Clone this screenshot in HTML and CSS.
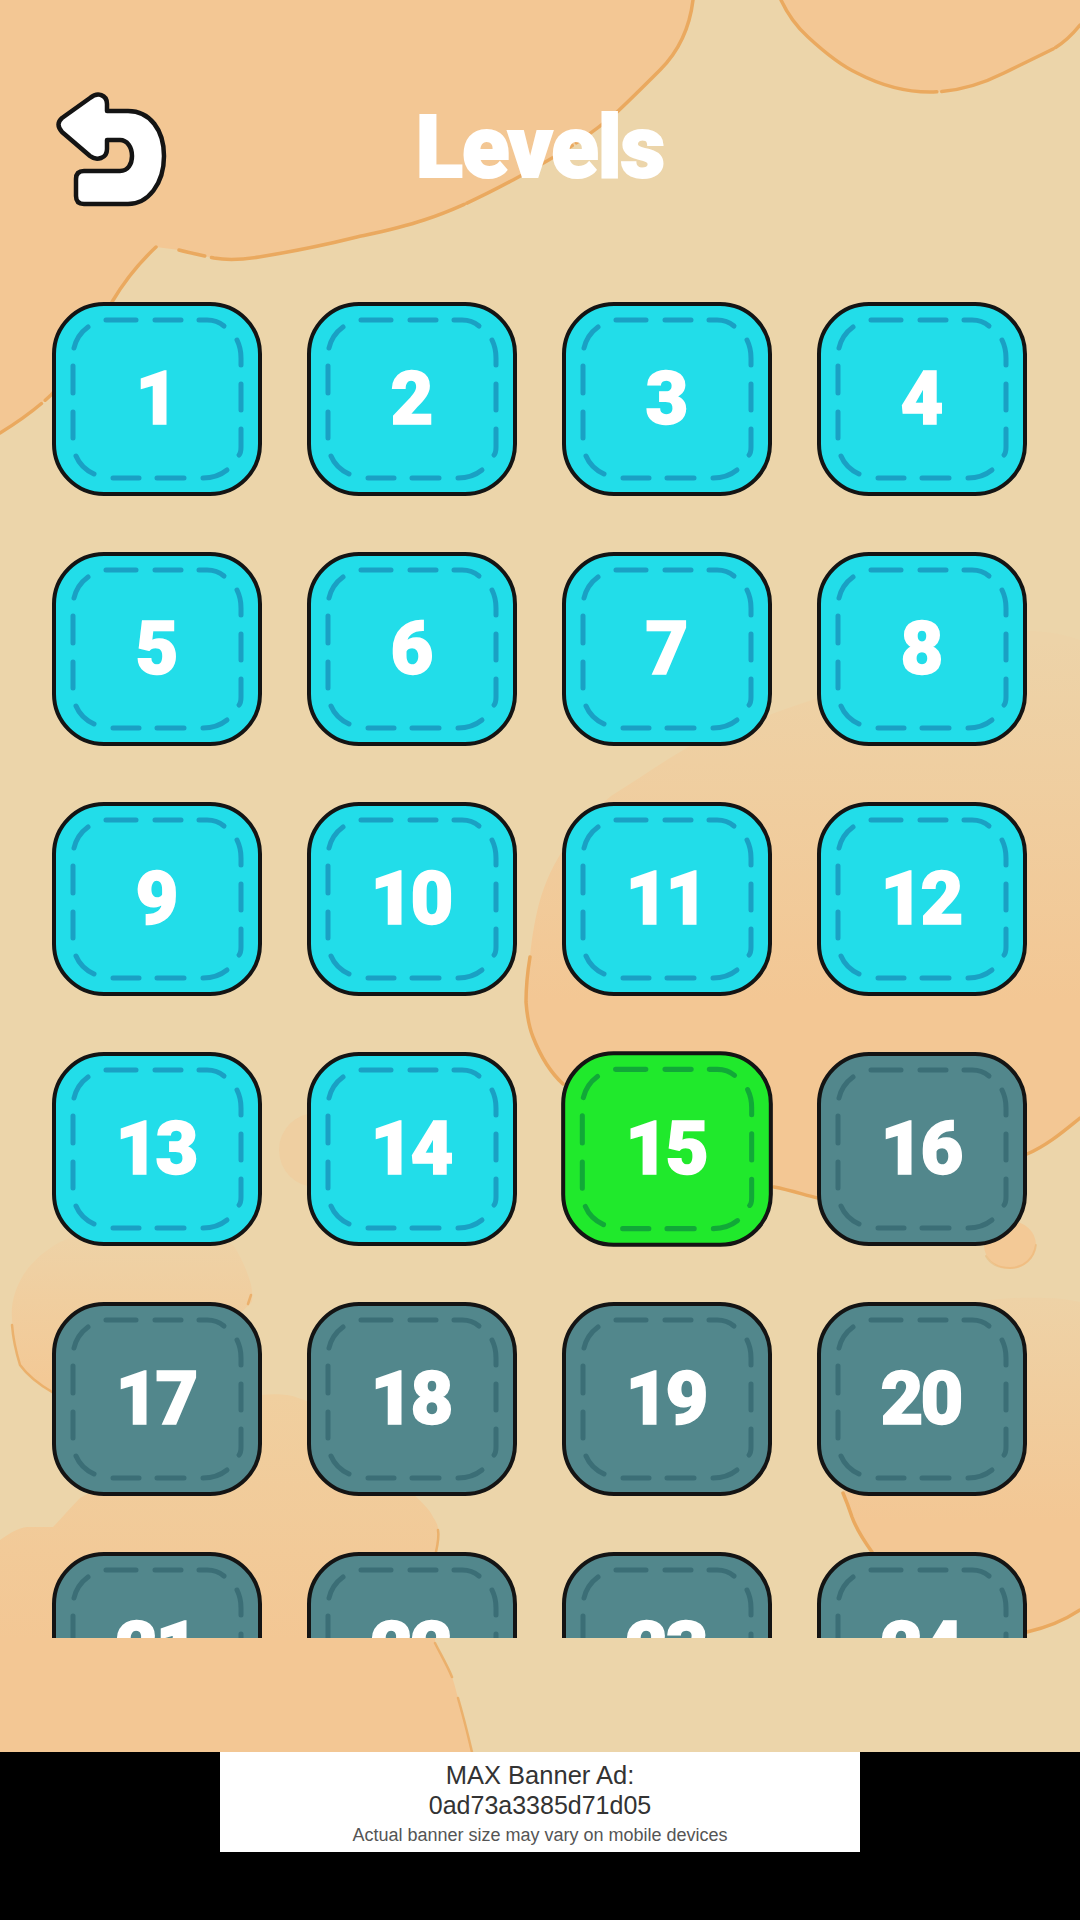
FILE: index.html
```html
<!DOCTYPE html>
<html lang="en">
<head>
    <meta charset="UTF-8">
    <meta name="viewport" content="width=device-width, initial-scale=1.0">
    <title>Levels</title>
    <link rel="stylesheet" href="styles.css">
</head>
<body>
    <!-- Shared stitch outline for the level tiles -->
    <svg class="defs" width="0" height="0">
        <symbol id="stitch" viewBox="0 0 210 194">
            <path d="M54 18H84M103 18H129M147 18H155Q165 18 172 24M185 38Q189 46 189 56V63M189 82V108M189 127V145Q189 151 187 153M175 168Q165 176 151 176M132 176H105M87 176H61M42 172Q29 166 24 154M21 136V110M21 91V64M22 46Q25 33 36 25"/>
        </symbol>
    </svg>

    <main class="game">
        <!-- Background blobs -->
        <svg class="backdrop" viewBox="0 0 1080 1752">
            <defs>
                <linearGradient id="fade-mid" gradientUnits="userSpaceOnUse" x1="0" y1="640" x2="0" y2="1000">
                    <stop offset="0" stop-color="#edd3a8"/>
                    <stop offset="1" stop-color="#f3c794"/>
                </linearGradient>
                <linearGradient id="fade-left" gradientUnits="userSpaceOnUse" x1="0" y1="1240" x2="0" y2="1380">
                    <stop offset="0" stop-color="#eed2a6"/>
                    <stop offset="1" stop-color="#f3c996"/>
                </linearGradient>
                <linearGradient id="fade-low" gradientUnits="userSpaceOnUse" x1="0" y1="1395" x2="0" y2="1640">
                    <stop offset="0" stop-color="#f0cf9f"/>
                    <stop offset="1" stop-color="#f3c794"/>
                </linearGradient>
                <linearGradient id="fade-right" gradientUnits="userSpaceOnUse" x1="0" y1="1298" x2="0" y2="1520">
                    <stop offset="0" stop-color="#eed2a6"/>
                    <stop offset="1" stop-color="#f3c794"/>
                </linearGradient>
            </defs>

            <path class="blob" d="M693 0C690 25 680 50 660 70C645 85 630 100 616 113C585 140 550 160 513 180C485 195 455 210 424 220C400 228 380 232 357 237C325 245 290 252 259 257C240 260 225 260 214 258C200 255 190 253 179 250L156 247C140 262 125 280 112 302C95 335 75 370 51 395C35 410 18 422 0 433L0 0Z"/>
            <path class="blob-line" d="M693 0C690 25 680 50 660 70C645 85 630 100 616 113C585 140 550 160 513 180C485 195 455 210 424 220C400 228 380 232 357 237C325 245 290 252 259 257C240 260 225 260 214 258C200 255 190 253 179 250"/>
            <path class="blob-line" d="M156 247C140 262 125 280 112 302C95 335 75 370 51 395C35 410 18 422 0 433"/>

            <path class="blob" d="M781 0C788 15 798 28 808 37C822 50 840 65 857 73C880 85 905 92 930 92C955 92 980 85 1004 73C1020 65 1035 58 1053 49C1062 44 1072 35 1080 25L1080 0Z"/>
            <path class="blob-line" d="M781 0C788 15 798 28 808 37C822 50 840 65 857 73C880 85 905 92 930 92C955 92 980 85 1004 73C1020 65 1035 58 1053 49C1062 44 1072 35 1080 25"/>

            <circle class="blob-faint" cx="316" cy="1150" r="37"/>

            <path class="blob-mid" d="M1080 640C1060 633 1045 631 1025 631C950 650 880 675 818 698C775 712 735 728 692 745C665 760 640 778 611 796C592 812 578 830 563 850C550 870 542 890 537 912C533 930 531 945 530 957C527 975 526 990 526 1002C527 1015 529 1027 533 1037C540 1055 550 1072 563 1084C620 1130 700 1170 774 1187C790 1190 805 1195 818 1198C900 1190 970 1175 1027 1154C1048 1145 1065 1130 1080 1118Z"/>
            <path class="blob-line" d="M530 957C527 975 526 990 526 1002C527 1015 529 1027 533 1037C540 1055 550 1072 563 1084"/>
            <path class="blob-line" d="M774 1187C790 1190 805 1195 818 1198"/>
            <path class="blob-line" d="M1027 1154C1048 1145 1065 1130 1080 1118"/>

            <ellipse class="blob-small" cx="1010" cy="1245" rx="26" ry="24"/>
            <path class="blob-line faint" d="M986 1256C990 1263 998 1268 1010 1268C1024 1268 1034 1258 1036 1245"/>

            <path class="blob-left" d="M60 1242C42 1252 28 1265 20 1281C13 1295 11 1307 12 1319C13 1335 16 1352 20 1365C28 1376 40 1385 52 1392L150 1400L252 1302C253 1295 252 1288 250 1281C246 1268 240 1255 233 1245C200 1225 100 1225 60 1242Z"/>
            <path class="blob-line thin" d="M12 1325C13 1338 16 1352 20 1365C28 1376 40 1385 52 1392"/>
            <path class="blob-line thin" d="M251 1295L248 1304"/>

            <path class="blob-low" d="M0 1540C10 1533 18 1528 27 1527L53 1527C62 1518 70 1508 80 1498L260 1395C270 1394 280 1394 287 1395C295 1396 300 1399 307 1401L413 1494C422 1502 430 1510 433 1517C437 1523 438 1526 438 1529L437 1552L435 1643C441 1655 447 1665 452 1677C455 1685 456 1691 458 1698C463 1715 468 1735 472 1752L0 1752Z"/>
            <path class="blob-line thin" d="M438 1530C439 1535 438 1543 436 1552"/>
            <path class="blob-line thin" d="M435 1643C441 1655 447 1665 452 1677M458 1698C463 1715 468 1735 472 1752"/>

            <path class="blob-right" d="M977 1302C1000 1298 1025 1297 1047 1298C1058 1298 1070 1300 1080 1302L1080 1610C1065 1620 1045 1628 1027 1632L980 1637L920 1630L872 1552C862 1538 856 1528 852 1517C849 1508 846 1500 843 1493Z"/>
            <path class="blob-line" d="M843 1493C846 1500 849 1508 852 1517C856 1528 862 1538 872 1552"/>
            <path class="blob-line" d="M1027 1632C1045 1628 1065 1620 1080 1610"/>
        </svg>

        <header class="top-bar">
            <svg class="back-icon" viewBox="0 0 140 140">
                <path d="M50 18Q56 13 61 15Q67 17 67 24V31H88C110 31 124 50 124 76C124 104 108 124 88 124H44Q36 124 36 116V99Q36 91 44 91H80C88 91 92 84 92 76C92 67 87 60 80 60H67V69Q67 76 61 78Q55 80 50 76L22 52Q15 44 22 38Z"/>
            </svg>
            <h1 class="title">Levels</h1>
        </header>

        <div class="level-scroll">
            <div class="level-grid">
                <button class="tile"><svg class="stitches" viewBox="0 0 210 194"><use href="#stitch"/></svg>1</button>
                <button class="tile"><svg class="stitches" viewBox="0 0 210 194"><use href="#stitch"/></svg>2</button>
                <button class="tile"><svg class="stitches" viewBox="0 0 210 194"><use href="#stitch"/></svg>3</button>
                <button class="tile"><svg class="stitches" viewBox="0 0 210 194"><use href="#stitch"/></svg>4</button>
                <button class="tile"><svg class="stitches" viewBox="0 0 210 194"><use href="#stitch"/></svg>5</button>
                <button class="tile"><svg class="stitches" viewBox="0 0 210 194"><use href="#stitch"/></svg>6</button>
                <button class="tile"><svg class="stitches" viewBox="0 0 210 194"><use href="#stitch"/></svg>7</button>
                <button class="tile"><svg class="stitches" viewBox="0 0 210 194"><use href="#stitch"/></svg>8</button>
                <button class="tile"><svg class="stitches" viewBox="0 0 210 194"><use href="#stitch"/></svg>9</button>
                <button class="tile"><svg class="stitches" viewBox="0 0 210 194"><use href="#stitch"/></svg>10</button>
                <button class="tile"><svg class="stitches" viewBox="0 0 210 194"><use href="#stitch"/></svg>11</button>
                <button class="tile"><svg class="stitches" viewBox="0 0 210 194"><use href="#stitch"/></svg>12</button>
                <button class="tile"><svg class="stitches" viewBox="0 0 210 194"><use href="#stitch"/></svg>13</button>
                <button class="tile"><svg class="stitches" viewBox="0 0 210 194"><use href="#stitch"/></svg>14</button>
                <button class="tile current"><svg class="stitches" viewBox="0 0 210 194"><use href="#stitch"/></svg>15</button>
                <button class="tile locked"><svg class="stitches" viewBox="0 0 210 194"><use href="#stitch"/></svg>16</button>
                <button class="tile locked"><svg class="stitches" viewBox="0 0 210 194"><use href="#stitch"/></svg>17</button>
                <button class="tile locked"><svg class="stitches" viewBox="0 0 210 194"><use href="#stitch"/></svg>18</button>
                <button class="tile locked"><svg class="stitches" viewBox="0 0 210 194"><use href="#stitch"/></svg>19</button>
                <button class="tile locked"><svg class="stitches" viewBox="0 0 210 194"><use href="#stitch"/></svg>20</button>
                <button class="tile locked"><svg class="stitches" viewBox="0 0 210 194"><use href="#stitch"/></svg>21</button>
                <button class="tile locked"><svg class="stitches" viewBox="0 0 210 194"><use href="#stitch"/></svg>22</button>
                <button class="tile locked"><svg class="stitches" viewBox="0 0 210 194"><use href="#stitch"/></svg>23</button>
                <button class="tile locked"><svg class="stitches" viewBox="0 0 210 194"><use href="#stitch"/></svg>24</button>
            </div>
        </div>
    </main>

    <footer class="ad-strip">
        <div class="ad-banner">
            <p class="ad-title">MAX Banner Ad:<br><span class="ad-id">0ad73a3385d71d05</span></p>
            <p class="ad-note">Actual banner size may vary on mobile devices</p>
        </div>
    </footer>
</body>
</html>
```
FILE: styles.css
```css
body {
    margin: 0;
    width: 1080px;
    height: 1920px;
    overflow: hidden;
    background-color: #000;
    font-family: "Liberation Sans", Arial, sans-serif;
}

.defs {
    position: absolute;
}

.game {
    position: relative;
    height: 1752px;
    overflow: hidden;
    background-color: #ecd5aa;
}

.backdrop {
    position: absolute;
    top: 0;
    left: 0;
    width: 1080px;
    height: 1752px;
}

.blob {
    fill: #f3c794;
}

.blob-mid {
    fill: url(#fade-mid);
}

.blob-left {
    fill: url(#fade-left);
}

.blob-low {
    fill: url(#fade-low);
}

.blob-right {
    fill: url(#fade-right);
}

.blob-faint {
    fill: #efcfa1;
}

.blob-small {
    fill: #f3c996;
}

.blob-line {
    fill: none;
    stroke: #eaa95f;
    stroke-width: 3.5;
    stroke-linecap: round;
    stroke-dasharray: 190 5 120 3 260 7;
}

.blob-line.thin {
    stroke-width: 2.5;
    opacity: 0.8;
}

.blob-line.faint {
    stroke-width: 2;
    opacity: 0.35;
}

.top-bar {
    position: relative;
    display: grid;
    grid-template-columns: 140px 1fr 140px;
    height: 140px;
    padding: 80px 40px 0;
}

.back-icon {
    width: 140px;
    height: 140px;
    fill: #fff;
    stroke: #141414;
    stroke-width: 4.5;
    stroke-linejoin: round;
}

.title {
    margin: 0;
    grid-column: 2;
    text-align: center;
    color: #fff;
    font-family: Roboto, sans-serif;
    font-size: 87px;
    font-weight: 900;
    line-height: 134px;
    letter-spacing: -1px;
    -webkit-text-stroke: 2px #fff;
}

.level-scroll {
    position: relative;
    height: 1336px;
    margin-top: 82px;
    padding-left: 52px;
    overflow: hidden;
}

.level-grid {
    display: grid;
    grid-template-columns: repeat(4, 210px);
    grid-auto-rows: 194px;
    column-gap: 45px;
    row-gap: 56px;
}

.tile {
    position: relative;
    display: flex;
    align-items: center;
    justify-content: center;
    box-sizing: border-box;
    padding: 0 3px 2px 0;
    border: 4px solid #141414;
    border-radius: 52px;
    background-color: #22dde9;
    color: #1aa0c4;
    font-family: Roboto, sans-serif;
    font-size: 74px;
    font-weight: 900;
    -webkit-text-fill-color: #fff;
    -webkit-text-stroke: 1.5px #fff;
    letter-spacing: -3px;
}

.stitches {
    position: absolute;
    top: -4px;
    left: -4px;
    width: 210px;
    height: 194px;
    fill: none;
    stroke: currentColor;
    stroke-width: 5;
    stroke-linecap: round;
}

.tile.current {
    background-color: #20e92c;
    color: #11a838;
    transform: scale(1.008);
}

.tile.locked {
    background-color: #52878c;
    color: #3b6e76;
}

.ad-strip {
    height: 168px;
    display: flex;
    justify-content: center;
    align-items: flex-start;
}

.ad-banner {
    width: 640px;
    height: 100px;
    background-color: #fff;
    text-align: center;
}

.ad-title {
    margin: 0;
    padding-top: 8px;
    color: #333;
    font-size: 25.5px;
    line-height: 30px;
}

.ad-id {
    font-size: 25px;
}

.ad-note {
    margin: 4px 0 0;
    color: #555;
    font-size: 18px;
    line-height: 22px;
}
```
